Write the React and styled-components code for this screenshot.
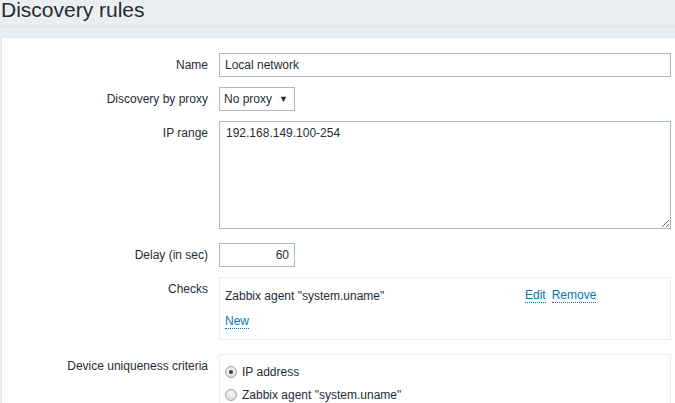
import React from "react";
import styled, { createGlobalStyle } from "styled-components";

const GlobalStyle = createGlobalStyle`
  html, body {
    margin: 0;
    padding: 0;
    background: #ebeef1;
    font-family: "Liberation Sans", Arial, sans-serif;
    font-size: 12px;
    color: #1f2c33;
    overflow: hidden;
  }
`;

const App = () => {
  return (
    <>
      <GlobalStyle />
      <Page>
        <Header>
          <Title>Discovery rules</Title>
        </Header>
        <Panel>
          <FormList>
            <Row>
              <Label>Name</Label>
              <TextInput readOnly defaultValue="Local network" $width={452} />
            </Row>
            <Row>
              <Label>Discovery by proxy</Label>
              <Select>
                <span>No proxy</span>
                <Arrow>▼</Arrow>
              </Select>
            </Row>
            <Row $extra={4}>
              <Label>IP range</Label>
              <TextArea readOnly defaultValue="192.168.149.100-254" />
            </Row>
            <Row>
              <Label>Delay (in sec)</Label>
              <TextInput readOnly defaultValue="60" $width={76} $right />
            </Row>
            <Row $extra={4}>
              <Label>Checks</Label>
              <Box $padding="5px 5px 4px">
                <CheckRow>
                  <CheckName>Zabbix agent "system.uname"</CheckName>
                  <Actions>
                    <Link>Edit</Link>
                    <Link>Remove</Link>
                  </Actions>
                </CheckRow>
                <CheckRow>
                  <Link>New</Link>
                </CheckRow>
              </Box>
            </Row>
            <Row>
              <Label>Device uniqueness criteria</Label>
              <Box $padding="5px 5px 4px">
                <RadioRow>
                  <Radio $checked />
                  IP address
                </RadioRow>
                <RadioRow>
                  <Radio />
                  Zabbix agent "system.uname"
                </RadioRow>
              </Box>
            </Row>
          </FormList>
        </Panel>
      </Page>
    </>
  );
};

export default App;

const Page = styled.div`
  display: flex;
  flex-direction: column;
  height: 403px;
  overflow: hidden;
`;

const Header = styled.div`
  flex-shrink: 0;
  height: 26px;
  border-bottom: 1px solid #dfe4e7;
  margin-bottom: 10px;
  display: flex;
  align-items: flex-start;
`;

const Title = styled.h1`
  margin: 0;
  padding-left: 1px;
  font-size: 21px;
  font-weight: normal;
  line-height: 20px;
  color: #1f2c33;
`;

const Panel = styled.div`
  flex: 1 0 auto;
  margin-left: 1px;
  background: #ffffff;
  border-top: 1px solid #dfe4e7;
  border-left: 1px solid #dfe4e7;
  padding-top: 15px;
`;

const FormList = styled.div`
  display: flex;
  flex-direction: column;
  gap: 10px;
`;

const Row = styled.div`
  display: flex;
  align-items: flex-start;
  margin-bottom: ${(p) => p.$extra || 0}px;
`;

const Label = styled.div`
  width: 206px;
  padding-right: 11px;
  text-align: right;
  line-height: 24px;
  white-space: nowrap;
`;

const TextInput = styled.input`
  box-sizing: border-box;
  width: ${(p) => p.$width}px;
  height: 24px;
  margin: 0;
  padding: 0 5px;
  border: 1px solid #acbbc2;
  border-radius: 0;
  font-family: inherit;
  font-size: 12px;
  color: #1f2c33;
  text-align: ${(p) => (p.$right ? "right" : "left")};
  outline: none;
`;

const Select = styled.div`
  box-sizing: border-box;
  width: 76px;
  height: 24px;
  border: 1px solid #acbbc2;
  padding: 0 4px 0 4px;
  display: flex;
  align-items: center;
  justify-content: space-between;
`;

const Arrow = styled.span`
  font-size: 9px;
  color: #1f2c33;
  margin-right: 2px;
`;

const TextArea = styled.textarea`
  box-sizing: border-box;
  display: block;
  width: 452px;
  height: 108px;
  margin: 0;
  padding: 4px 6px;
  border: 1px solid #acbbc2;
  border-radius: 0;
  font-family: inherit;
  font-size: 12px;
  line-height: 14px;
  color: #1f2c33;
  outline: none;
`;

const Box = styled.div`
  box-sizing: border-box;
  width: 452px;
  border: 1px solid #ebeef1;
  padding: ${(p) => p.$padding};
`;

const CheckRow = styled.div`
  display: flex;
  align-items: center;
  height: 26px;
`;

const CheckName = styled.span`
  width: 300px;
`;

const Actions = styled.span`
  display: flex;
  gap: 6px;
`;

const Link = styled.span`
  color: #0275b8;
  border-bottom: 1px dotted #0275b8;
  line-height: 13px;
`;

const RadioRow = styled.div`
  display: flex;
  align-items: center;
  gap: 5px;
  height: 23px;
`;

const Radio = styled.span`
  box-sizing: border-box;
  width: 12px;
  height: 12px;
  border-radius: 50%;
  border: 1px solid #a3a3a3;
  background: radial-gradient(circle at 50% 35%, #f4f4f4, #d8d8d8);
  display: flex;
  align-items: center;
  justify-content: center;
  &::after {
    content: "";
    width: 4px;
    height: 4px;
    border-radius: 50%;
    background: ${(p) => (p.$checked ? "#3a3a3a" : "transparent")};
  }
`;
